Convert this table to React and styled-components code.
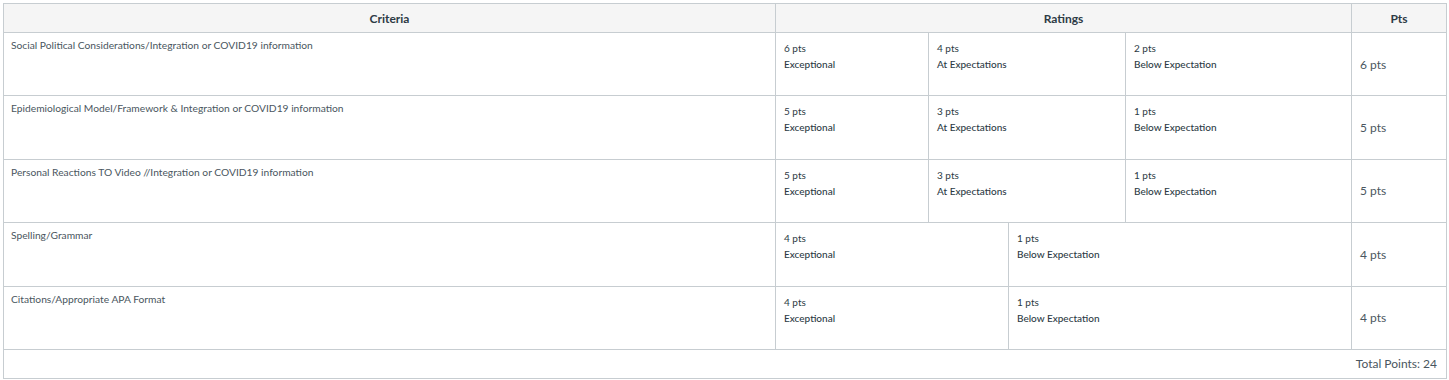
import React from 'react';
import styled, { createGlobalStyle } from 'styled-components';

const GlobalStyle = createGlobalStyle`
  body {
    margin: 0;
    background: #fff;
    font-family: 'Lato', 'Helvetica Neue', Arial, sans-serif;
    color: #2d3b45;
  }
`;

const Page = styled.div`
  padding: 3px 3px 0 3px;
`;

const Table = styled.table`
  width: 1443px;
  border-collapse: collapse;
  table-layout: fixed;
`;

const HeadCell = styled.th`
  height: 28px;
  padding: 0;
  background: #f5f5f5;
  border: 1px solid #c7cdd1;
  font-size: 12px;
  font-weight: 700;
  color: #2d3b45;
  text-align: center;
  vertical-align: middle;
`;

const CriterionCell = styled.td`
  padding: 5px 7px 0 7px;
  border: 1px solid #c7cdd1;
  vertical-align: top;
  font-size: 10.25px;
  line-height: 14px;
  color: #4a5660;
`;

const RatingsCell = styled.td`
  padding: 0;
  border: 1px solid #c7cdd1;
  vertical-align: top;
`;

const Tiers = styled.div`
  display: flex;
  height: 62.4px;
`;

const Tier = styled.div`
  box-sizing: border-box;
  width: ${(p) => p.$w}px;
  flex: ${(p) => (p.$last ? '1 1 auto' : '0 0 auto')};
  padding: 7px 8px 0 8px;
  border-left: ${(p) => (p.$first ? 'none' : '1px solid #c7cdd1')};
  font-size: 10px;
  line-height: 16px;
  color: #2d3b45;
`;

const TierPoints = styled.div``;

const TierLabel = styled.div`
  font-weight: 500;
`;

const PtsCell = styled.td`
  padding: 0 8px;
  border: 1px solid #c7cdd1;
  vertical-align: middle;
  font-size: 12px;
  color: #4a5660;
`;

const TotalCell = styled.td`
  height: 28px;
  padding: 0 9px;
  border: 1px solid #c7cdd1;
  text-align: right;
  vertical-align: middle;
  font-size: 12px;
  color: #4a5660;
`;

const rows = [
  {
    desc: 'Social Political Considerations/Integration or COVID19 information',
    tiers: [
      ['6 pts', 'Exceptional', 152],
      ['4 pts', 'At Expectations', 197],
      ['2 pts', 'Below Expectation'],
    ],
    pts: '6 pts',
  },
  {
    desc: 'Epidemiological Model/Framework & Integration or COVID19 information',
    tiers: [
      ['5 pts', 'Exceptional', 152],
      ['3 pts', 'At Expectations', 197],
      ['1 pts', 'Below Expectation'],
    ],
    pts: '5 pts',
  },
  {
    desc: 'Personal Reactions TO Video //Integration or COVID19 information',
    tiers: [
      ['5 pts', 'Exceptional', 152],
      ['3 pts', 'At Expectations', 197],
      ['1 pts', 'Below Expectation'],
    ],
    pts: '5 pts',
  },
  {
    desc: 'Spelling/Grammar',
    tiers: [
      ['4 pts', 'Exceptional', 232],
      ['1 pts', 'Below Expectation'],
    ],
    pts: '4 pts',
  },
  {
    desc: 'Citations/Appropriate APA Format',
    tiers: [
      ['4 pts', 'Exceptional', 232],
      ['1 pts', 'Below Expectation'],
    ],
    pts: '4 pts',
  },
];

export default function App() {
  return (
    <Page>
      <GlobalStyle />
      <Table>
        <colgroup>
          <col style={{ width: 772 }} />
          <col style={{ width: 576 }} />
          <col style={{ width: 95 }} />
        </colgroup>
        <thead>
          <tr>
            <HeadCell>Criteria</HeadCell>
            <HeadCell>Ratings</HeadCell>
            <HeadCell>Pts</HeadCell>
          </tr>
        </thead>
        <tbody>
          {rows.map((row) => (
            <tr key={row.desc}>
              <CriterionCell>{row.desc}</CriterionCell>
              <RatingsCell>
                <Tiers>
                  {row.tiers.map(([p, label, w], i) => (
                    <Tier key={label} $w={w} $first={i === 0} $last={i === row.tiers.length - 1}>
                      <TierPoints>{p}</TierPoints>
                      <TierLabel>{label}</TierLabel>
                    </Tier>
                  ))}
                </Tiers>
              </RatingsCell>
              <PtsCell>{row.pts}</PtsCell>
            </tr>
          ))}
          <tr>
            <TotalCell colSpan={3}>Total Points: 24</TotalCell>
          </tr>
        </tbody>
      </Table>
    </Page>
  );
}
